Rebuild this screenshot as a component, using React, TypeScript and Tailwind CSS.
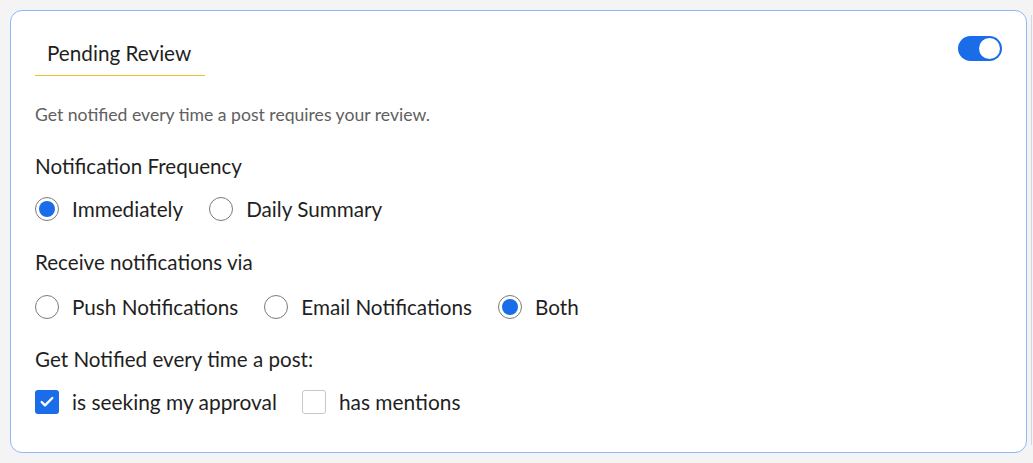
import React, { useState } from "react";
import { Check } from "lucide-react";

type Freq = "immediately" | "daily";
type Channel = "push" | "email" | "both";

function Radio({ checked, label, onClick }: { checked: boolean; label: string; onClick: () => void }) {
  return (
    <button type="button" onClick={onClick} className="flex items-center gap-[13px] mr-[26px]">
      <span className="flex h-6 w-6 items-center justify-center rounded-full border border-[#7a7a7a] bg-white">
        {checked && <span className="h-4 w-4 rounded-full bg-[#1a6ce8]" />}
      </span>
      <span className="text-[20.7px] leading-6 text-[#1f1f1f]">{label}</span>
    </button>
  );
}

function Checkbox({ checked, label, onClick }: { checked: boolean; label: string; onClick: () => void }) {
  return (
    <button type="button" onClick={onClick} className="flex items-center gap-[13px] mr-[25px]">
      <span
        className={
          checked
            ? "flex h-6 w-6 items-center justify-center rounded-[3px] bg-[#1a6ce8]"
            : "flex h-6 w-6 items-center justify-center rounded-[3px] border border-[#c8c8c8] bg-white"
        }
      >
        {checked && <Check className="h-4 w-4 text-white" strokeWidth={3.5} />}
      </span>
      <span className="text-[20.9px] leading-6 text-[#1f1f1f]">{label}</span>
    </button>
  );
}

export default function App() {
  const [enabled, setEnabled] = useState(true);
  const [freq, setFreq] = useState<Freq>("immediately");
  const [channel, setChannel] = useState<Channel>("both");
  const [approval, setApproval] = useState(true);
  const [mentions, setMentions] = useState(false);

  return (
    <div className="flex h-[463px] w-[1033px] bg-[#f4f4f4] pt-[10px] pl-[10px] font-['Lato',sans-serif]">
      <div className="h-[443px] w-[1017px] rounded-xl border border-[#8fb8f5] bg-white px-6">
        <div className="flex items-start justify-between pt-[25px]">
          <div className="w-[170px] border-b border-[#f2c230] px-[12px] pt-[3px] pb-[8px] text-[20.7px] leading-7 text-[#1f1f1f]">
            Pending Review
          </div>
          <button
            type="button"
            onClick={() => setEnabled(!enabled)}
            className={
              enabled
                ? "flex h-[25px] w-[44px] justify-end rounded-full bg-[#1a6ce8] p-[2px]"
                : "flex h-[25px] w-[44px] justify-start rounded-full bg-[#c8c8c8] p-[2px]"
            }
          >
            <span className="h-[21px] w-[21px] rounded-full bg-white" />
          </button>
        </div>

        <p className="mt-[27px] text-[17.6px] leading-6 text-[#606060]">
          Get notified every time a post requires your review.
        </p>

        <div className="mt-[25px] text-[20.6px] leading-7 text-[#1f1f1f]">Notification Frequency</div>
        <div className="mt-[17px] flex">
          <Radio checked={freq === "immediately"} label="Immediately" onClick={() => setFreq("immediately")} />
          <Radio checked={freq === "daily"} label="Daily Summary" onClick={() => setFreq("daily")} />
        </div>

        <div className="mt-[27px] text-[20.6px] leading-7 text-[#1f1f1f]">Receive notifications via</div>
        <div className="mt-[19px] flex">
          <Radio checked={channel === "push"} label="Push Notifications" onClick={() => setChannel("push")} />
          <Radio checked={channel === "email"} label="Email Notifications" onClick={() => setChannel("email")} />
          <Radio checked={channel === "both"} label="Both" onClick={() => setChannel("both")} />
        </div>

        <div className="mt-[26px] text-[20.6px] leading-7 text-[#1f1f1f]">Get Notified every time a post:</div>
        <div className="mt-[17px] flex">
          <Checkbox checked={approval} label="is seeking my approval" onClick={() => setApproval(!approval)} />
          <Checkbox checked={mentions} label="has mentions" onClick={() => setMentions(!mentions)} />
        </div>
      </div>
      <div className="ml-[4px] mt-[5px] h-[430px] w-[1px] bg-[#d6d6d6]" />
    </div>
  );
}
